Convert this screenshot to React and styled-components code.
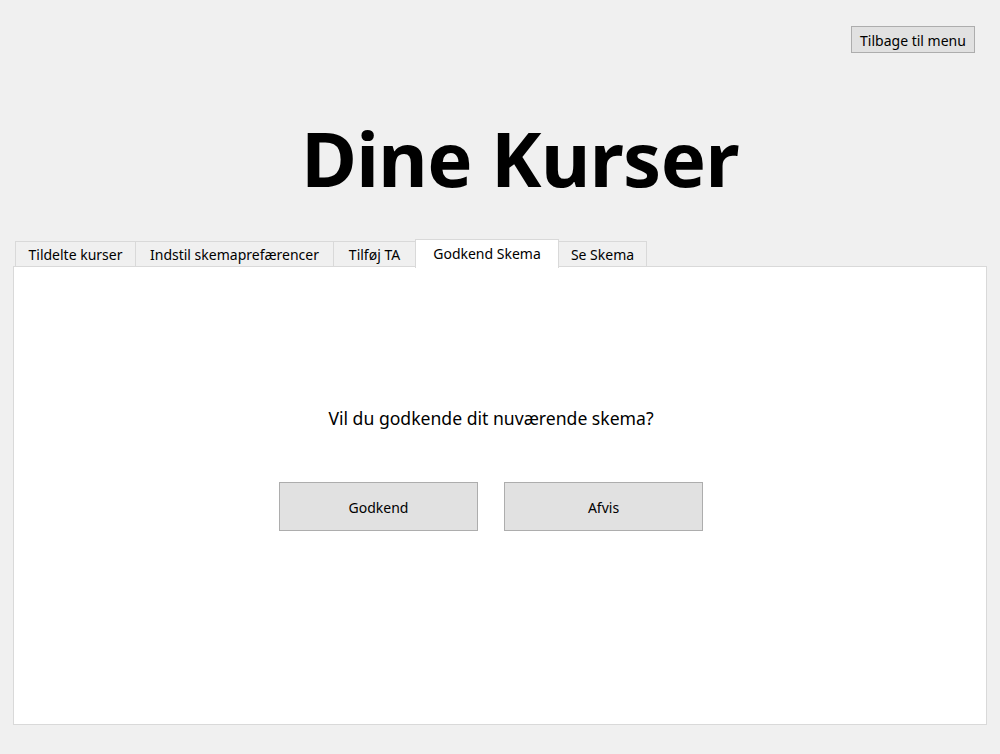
import React, { useState } from "react";
import styled, { createGlobalStyle } from "styled-components";

const Global = createGlobalStyle`
  html, body { margin: 0; padding: 0; background: #f0f0f0; }
  body { font-family: "Noto Sans", "Open Sans", sans-serif; color: #000; }
  * { box-sizing: border-box; }
`;

const Page = styled.div`
  width: 1000px;
  height: 754px;
  display: flex;
  flex-direction: column;
  background: #f0f0f0;
  overflow: hidden;
`;

const TopBar = styled.div`
  display: flex;
  justify-content: flex-end;
  padding: 26px 25px 0 0;
`;

const MenuButton = styled.button`
  height: 27px;
  width: 124px;
  padding: 1px 0 0;
  background: #e1e1e1;
  border: 1px solid #adadad;
  font-family: "Noto Sans", sans-serif;
  font-size: 14px;
  color: #000;
`;

const Title = styled.h1`
  margin: 0;
  padding: 57px 0 0 40px;
  text-align: center;
  font-family: "Noto Sans", sans-serif;
  font-weight: 700;
  font-size: 76px;
  line-height: 96px;
  letter-spacing: -0.6px;
`;

const TabArea = styled.div`
  display: flex;
  flex-direction: column;
  padding: 0 13px;
  margin-top: 32px;
`;

const TabRow = styled.div`
  display: flex;
  align-items: flex-end;
  height: 29px;
  padding-left: 2px;
  position: relative;
  z-index: 1;
`;

const Tab = styled.button`
  height: ${(p) => (p.$active ? "29px" : "26px")};
  width: ${(p) => p.$w}px;
  margin-bottom: ${(p) => (p.$active ? "-1px" : "0")};
  padding: ${(p) => (p.$active ? "0 0 2px" : "1px 0 0")};
  background: ${(p) => (p.$active ? "#fff" : "#f0f0f0")};
  border: 1px solid #d9d9d9;
  border-bottom: ${(p) => (p.$active ? "none" : "1px solid #d9d9d9")};
  margin-left: -1px;
  font-family: "Noto Sans", sans-serif;
  font-size: 14px;
  color: #000;
  &:first-child { margin-left: 0; }
`;

const Panel = styled.div`
  height: 459px;
  background: #fff;
  border: 1px solid #d9d9d9;
  margin-top: -1px;
  display: flex;
  flex-direction: column;
  align-items: center;
  padding: 139px 18px 0 0;
`;

const Question = styled.div`
  font-family: "Noto Sans", sans-serif;
  font-size: 17.6px;
  line-height: 24px;
`;

const ButtonRow = styled.div`
  display: flex;
  gap: 26px;
  margin-top: 52px;
`;

const ActionButton = styled.button`
  width: 199px;
  height: 49px;
  padding: 1px 0 0;
  background: #e1e1e1;
  border: 1px solid #adadad;
  font-family: "Noto Sans", sans-serif;
  font-size: 14px;
  color: #000;
`;

const tabs = [
  { label: "Tildelte kurser", w: 121 },
  { label: "Indstil skemaprefærencer", w: 199 },
  { label: "Tilføj TA", w: 83 },
  { label: "Godkend Skema", w: 144 },
  { label: "Se Skema", w: 89 },
];

export default function App() {
  const [active, setActive] = useState(3);
  return (
    <Page>
      <Global />
      <TopBar>
        <MenuButton>Tilbage til menu</MenuButton>
      </TopBar>
      <Title>Dine Kurser</Title>
      <TabArea>
        <TabRow>
          {tabs.map((t, i) => (
            <Tab key={t.label} $w={t.w} $active={i === active} onClick={() => setActive(i)}>
              {t.label}
            </Tab>
          ))}
        </TabRow>
        <Panel>
          <Question>Vil du godkende dit nuværende skema?</Question>
          <ButtonRow>
            <ActionButton>Godkend</ActionButton>
            <ActionButton>Afvis</ActionButton>
          </ButtonRow>
        </Panel>
      </TabArea>
    </Page>
  );
}
